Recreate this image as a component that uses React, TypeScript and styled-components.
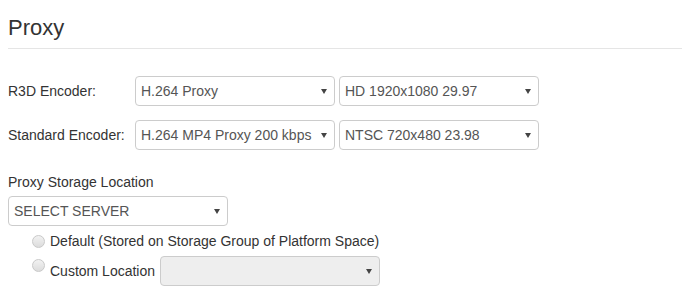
import styled, { createGlobalStyle } from "styled-components";

const GlobalStyle = createGlobalStyle`
  body {
    margin: 0;
    background: #ffffff;
    font-family: "Liberation Sans", Arial, sans-serif;
    font-size: 14px;
    color: #333333;
  }
`;

const Page = styled.div`
  padding: 0 0 0 8px;
`;

const Header = styled.h3`
  margin: 16px 0 0;
  padding-bottom: 8px;
  border-bottom: 1px solid #e5e5e5;
  font-size: 22px;
  line-height: 24px;
  font-weight: normal;
  color: #333333;
`;

const EncoderGrid = styled.div`
  display: grid;
  grid-template-columns: 123px 200px 200px;
  column-gap: 4px;
  row-gap: 14px;
  align-items: center;
  margin-top: 27px;
`;

const FieldLabel = styled.label`
  min-width: 0;
  line-height: 20px;
  white-space: nowrap;
`;

const SelectWrap = styled.div<{ $width?: number }>`
  position: relative;
  width: ${(p) => (p.$width ? `${p.$width}px` : "100%")};
  height: 30px;

  &::after {
    content: "";
    position: absolute;
    right: 8px;
    top: 13px;
    border-left: 3.5px solid transparent;
    border-right: 3.5px solid transparent;
    border-top: 5px solid #444444;
    pointer-events: none;
  }
`;

const Select = styled.select`
  appearance: none;
  -webkit-appearance: none;
  box-sizing: border-box;
  width: 100%;
  height: 30px;
  margin: 0;
  padding: 0 22px 0 5px;
  border: 1px solid #cccccc;
  border-radius: 4px;
  background: #ffffff;
  font-family: "Liberation Sans", Arial, sans-serif;
  font-size: 14px;
  color: #555555;
  outline: none;

  &:disabled {
    background: #eeeeee;
    opacity: 1;
  }
`;

const StorageLabel = styled.div`
  margin-top: 22px;
  line-height: 20px;
`;

const StorageBlock = styled.div`
  margin-top: 4px;
`;

const RadioGroup = styled.div`
  display: flex;
  flex-direction: column;
  gap: 5px;
  margin-top: 5px;
  padding-left: 24px;
`;

const RadioRow = styled.label`
  display: flex;
  align-items: center;
  line-height: 20px;
  white-space: nowrap;
`;

const Radio = styled.input<{ $raised?: boolean }>`
  appearance: none;
  -webkit-appearance: none;
  box-sizing: border-box;
  width: 13px;
  height: 13px;
  margin: ${(p) => (p.$raised ? "3px 5px 0 0" : "1px 5px 0 0")};
  align-self: ${(p) => (p.$raised ? "flex-start" : "center")};
  border: 1px solid #c9c9c9;
  border-radius: 50%;
  background: linear-gradient(#f2f2f2, #dcdcdc);
`;

const RowGap = styled.span`
  display: inline-block;
  width: 5px;
`;

export default function App() {
  return (
    <Page>
      <GlobalStyle />
      <Header>Proxy</Header>

      <EncoderGrid>
        <FieldLabel>R3D Encoder:</FieldLabel>
        <SelectWrap>
          <Select defaultValue="h264">
            <option value="h264">H.264 Proxy</option>
          </Select>
        </SelectWrap>
        <SelectWrap>
          <Select defaultValue="hd">
            <option value="hd">HD 1920x1080 29.97</option>
          </Select>
        </SelectWrap>

        <FieldLabel>Standard Encoder:</FieldLabel>
        <SelectWrap>
          <Select defaultValue="mp4">
            <option value="mp4">H.264 MP4 Proxy 200 kbps</option>
          </Select>
        </SelectWrap>
        <SelectWrap>
          <Select defaultValue="ntsc">
            <option value="ntsc">NTSC 720x480 23.98</option>
          </Select>
        </SelectWrap>
      </EncoderGrid>

      <StorageLabel>Proxy Storage Location</StorageLabel>
      <StorageBlock>
        <SelectWrap $width={220}>
          <Select defaultValue="none">
            <option value="none">SELECT SERVER</option>
          </Select>
        </SelectWrap>
      </StorageBlock>

      <RadioGroup>
        <RadioRow>
          <Radio type="radio" name="location" />
          Default (Stored on Storage Group of Platform Space)
        </RadioRow>
        <RadioRow>
          <Radio type="radio" name="location" $raised />
          Custom Location
          <RowGap />
          <SelectWrap $width={220}>
            <Select disabled defaultValue="">
              <option value=""></option>
            </Select>
          </SelectWrap>
        </RadioRow>
      </RadioGroup>
    </Page>
  );
}
